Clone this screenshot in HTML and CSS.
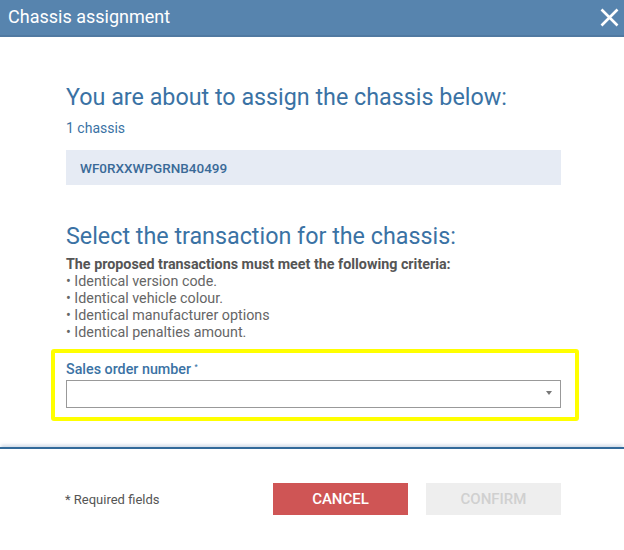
FILE: index.html
```html
<!DOCTYPE html>
<html>
<head>
<meta charset="utf-8">
<link rel="stylesheet" href="styles.css">
</head>
<body>
<div class="dialog">
  <header class="header">
    <span class="title">Chassis assignment</span>
    <svg class="close" width="19" height="19" viewBox="0 0 19 19"><path d="M1.5 1.5L17.5 17.5M17.5 1.5L1.5 17.5" stroke="#fff" stroke-width="2.6" fill="none"/></svg>
  </header>
  <main class="content">
    <h2 class="heading">You are about to assign the chassis below:</h2>
    <div class="count">1 chassis</div>
    <div class="chassis">WF0RXXWPGRNB40499</div>
    <h2 class="heading second">Select the transaction for the chassis:</h2>
    <div class="criteria">
      <div class="criteria-title">The proposed transactions must meet the following criteria:</div>
      <div>• Identical version code.</div>
      <div>• Identical vehicle colour.</div>
      <div>• Identical manufacturer options</div>
      <div>• Identical penalties amount.</div>
    </div>
    <div class="highlight">
      <label class="field-label">Sales order number <sup>*</sup></label>
      <div class="select"><span class="caret"></span></div>
    </div>
  </main>
  <footer class="footer">
    <span class="required">* Required fields</span>
    <div class="buttons">
      <button class="btn cancel">CANCEL</button>
      <button class="btn confirm">CONFIRM</button>
    </div>
  </footer>
</div>
</body>
</html>
```
FILE: styles.css
```css
* { box-sizing: border-box; }
html, body { margin: 0; padding: 0; background: #fff; }
body { font-family: Roboto, "Liberation Sans", sans-serif; width: 624px; height: 550px; overflow: hidden; }
.header {
  height: 37px;
  background: #5784ae;
  border-bottom: 2px solid #5079a1;
  display: flex;
  align-items: center;
  justify-content: space-between;
  padding: 0 5px 1px 8px;
}
.title { color: #fff; font-size: 18px; line-height: 1; }
.close { display: block; }
.content { padding: 47px 63px 0 66px; }
.heading {
  margin: 0;
  font-weight: 400;
  font-size: 23.3px;
  line-height: 27px;
  color: #3a72a4;
}
.count { margin-top: 9px; font-size: 14px; color: #3a72a4; line-height: 17px; }
.chassis {
  margin-top: 13px;
  height: 35px;
  background: #e6ebf4;
  color: #3a6a98;
  font-size: 13.5px;
  font-weight: 500;
  display: flex;
  align-items: center;
  padding-left: 14px;
}
.second { margin-top: 38px; }
.criteria { margin-top: 6px; font-size: 14.3px; line-height: 17px; color: #666; }
.criteria-title { font-weight: 700; color: #555; }
.highlight {
  margin: 8px -18px 0 -15px;
  border: 4px solid #ffff00;
  border-radius: 3px;
  padding: 8px 14px 9px 11px;
}
.field-label { display: block; font-size: 14.3px; color: #3a72a4; line-height: 17px; font-weight: 500; }
.field-label sup { font-size: 7px; vertical-align: top; position: relative; top: -2px; }
.select {
  margin-top: 2px;
  height: 28px;
  border: 1px solid #999;
  position: relative;
}
.caret {
  position: absolute;
  right: 8px;
  top: 10px;
  border-left: 3px solid transparent;
  border-right: 3px solid transparent;
  border-top: 4px solid #777;
}
.footer {
  margin-top: 26px;
  border-top: 2px solid #336a9a;
  box-shadow: 0 -3px 3px -1px rgba(120,150,185,0.35);
  display: flex;
  align-items: center;
  justify-content: space-between;
  padding: 34px 63px 0 65px;
}
.required { font-size: 13px; color: #555; }
.buttons { display: flex; gap: 18px; }
.btn {
  width: 135px;
  height: 32px;
  border: none;
  font-family: Roboto, sans-serif;
  font-size: 15px;
  font-weight: 500;
  padding: 0;
}
.cancel { background: #cf5555; color: #fff; }
.confirm { background: #eeeeee; color: #d0d0d0; }
```
